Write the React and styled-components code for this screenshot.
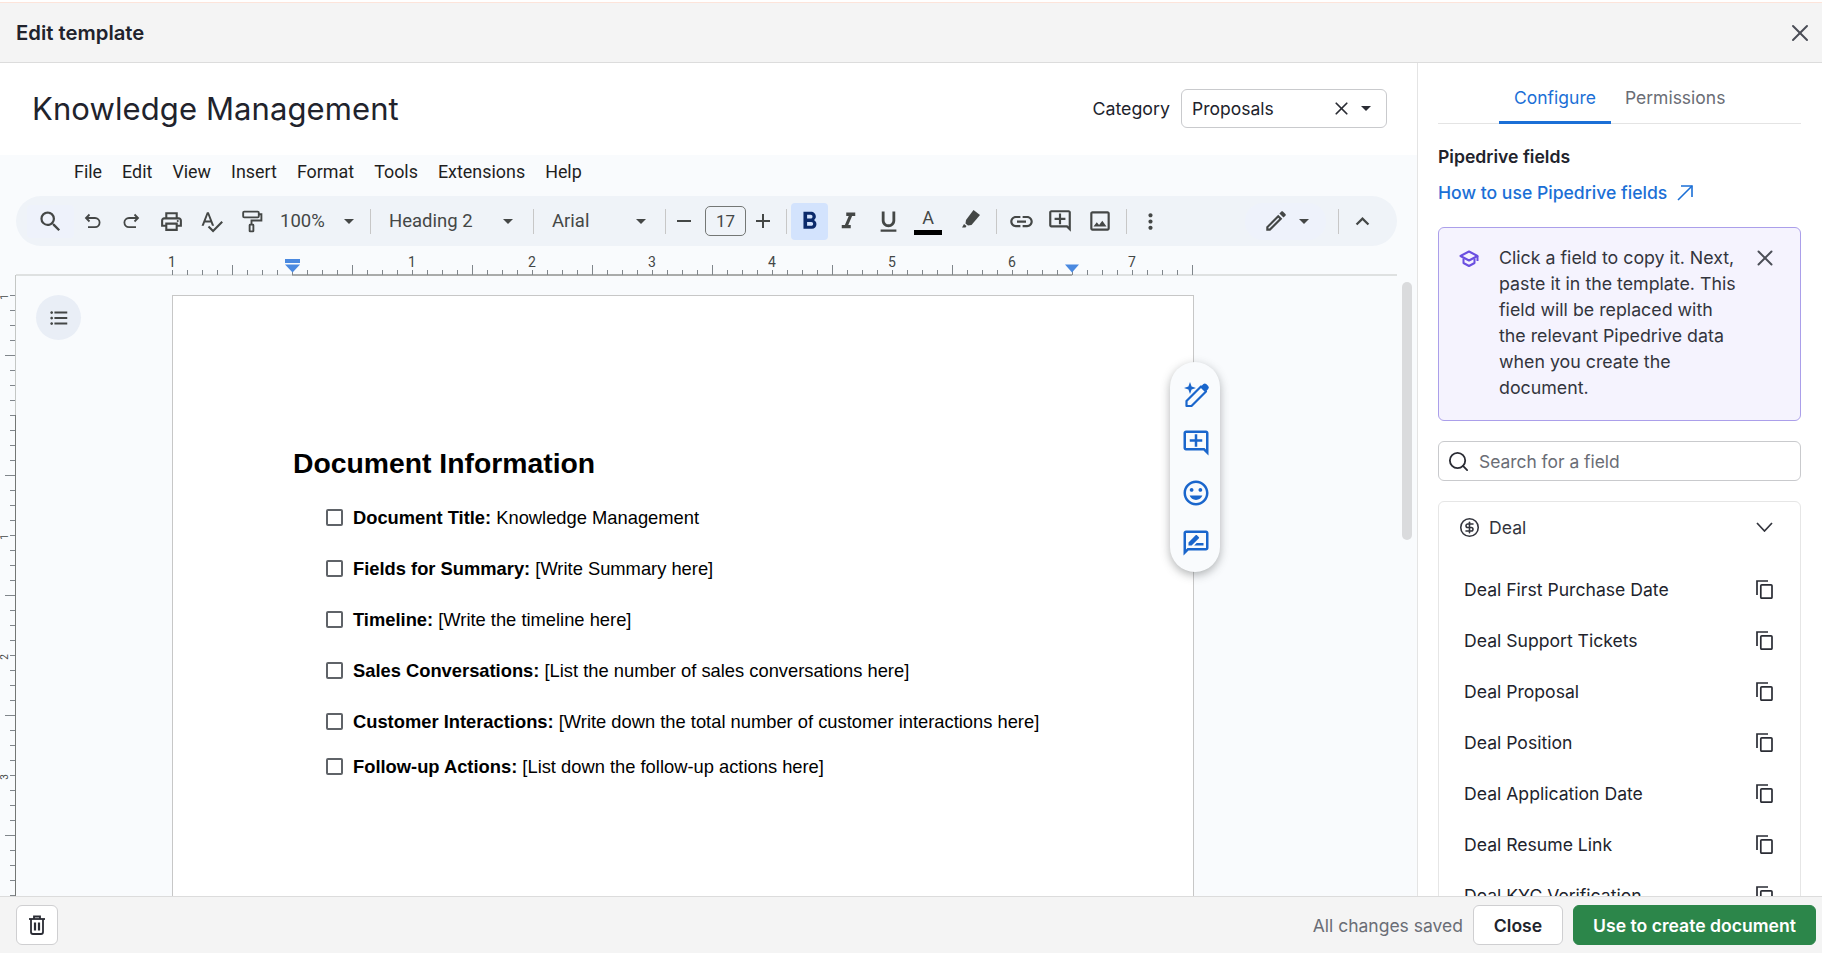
import React from 'react';
import styled, { createGlobalStyle } from 'styled-components';
import { CircleDollarSign, Search, X } from 'lucide-react';
import {
  MdExpandLess,
  MdFormatBold,
  MdFormatItalic,
  MdFormatListBulleted,
  MdFormatUnderlined,
  MdLink,
  MdMoreVert,
  MdOutlineAddComment,
  MdOutlineEdit,
  MdOutlineImage,
  MdOutlineInsertEmoticon,
  MdOutlineLocalPrintshop,
  MdOutlineRateReview,
  MdSearch,
  MdSpellcheck,
} from 'react-icons/md';

const inter = '"Inter", "Liberation Sans", sans-serif';
const docsFont = '"Roboto", "Liberation Sans", sans-serif';
const iconGrey = '#444746';
const linkBlue = '#1b6fd6';

const GlobalStyle = createGlobalStyle`
  html, body, #root {
    height: 100%;
    margin: 0;
  }
  body {
    font-family: ${inter};
    color: #21232c;
    background: #fff;
    overflow: hidden;
  }
  * {
    box-sizing: border-box;
  }
`;

const Shell = styled.div`
  height: 100vh;
  display: flex;
  flex-direction: column;
  overflow: hidden;
`;

const TopStripe = styled.div`
  height: 3px;
  flex: none;
  background: #f4f4f4;
  border-top: 2px solid #fff;
  border-bottom: 1px solid #fde4da;
`;

const Header = styled.header`
  height: 60px;
  flex: none;
  display: flex;
  align-items: center;
  justify-content: space-between;
  padding: 0 8px 0 16px;
  background: #f4f4f4;
  border-bottom: 1px solid #dcdcdc;
`;

const HeaderTitle = styled.h1`
  margin: 0;
  font-size: 20.3px;
  font-weight: 600;
`;

const IconButton = styled.button`
  display: flex;
  align-items: center;
  justify-content: center;
  padding: 0;
  border: 0;
  background: none;
  color: ${(p) => p.$color || '#4b4e57'};
`;

const Body = styled.div`
  flex: 1;
  min-height: 0;
  display: flex;
`;

const Main = styled.main`
  flex: 1;
  min-width: 0;
  display: flex;
  flex-direction: column;
`;

const TitleRow = styled.div`
  height: 92px;
  flex: none;
  display: flex;
  align-items: center;
  padding: 0 30px 2px 32px;
`;

const DocName = styled.div`
  font-size: 31px;
  flex: 1;
  letter-spacing: 0.1px;
`;

const CategoryLabel = styled.span`
  font-size: 17.8px;
  margin-right: 11px;
`;

const CategorySelect = styled.div`
  width: 206px;
  height: 39px;
  display: flex;
  align-items: center;
  padding: 0 15px 0 10px;
  border: 1px solid #c9cacd;
  border-radius: 6px;
  font-size: 17.5px;
`;

const CategoryValue = styled.span`
  flex: 1;
`;

const Caret = styled.span`
  width: 0;
  height: 0;
  flex: none;
  border-left: 5px solid transparent;
  border-right: 5px solid transparent;
  border-top: 5px solid ${(p) => p.$color || iconGrey};
  margin-left: ${(p) => p.$gap || 0}px;
`;

const Editor = styled.div`
  flex: 1;
  min-height: 0;
  display: flex;
  flex-direction: column;
  background: #f9fbfd;
  font-family: ${docsFont};
`;

const MenuBar = styled.nav`
  height: 41px;
  flex: none;
  display: flex;
  align-items: center;
  gap: 20px;
  padding: 0 0 8px 74px;
  font-size: 17.9px;
  color: #1f1f1f;
`;

const Toolbar = styled.div`
  width: 1381px;
  height: 50px;
  flex: none;
  margin-left: 16px;
  padding: 0 11px;
  display: flex;
  align-items: center;
  background: #eff3f8;
  border-radius: 25px;
  color: ${iconGrey};
`;

const Tool = styled.button`
  width: ${(p) => p.$w}px;
  height: ${(p) => (p.$tall ? 37 : 33)}px;
  flex: none;
  display: flex;
  align-items: center;
  justify-content: center;
  gap: ${(p) => p.$gap || 0}px;
  margin-left: ${(p) => p.$ml || 0}px;
  padding: 0;
  border: 0;
  border-radius: ${(p) => p.$radius || 4}px;
  background: ${(p) => p.$bg || 'none'};
  color: ${(p) => p.$color || iconGrey};
  font-family: ${docsFont};
`;

const Pick = styled.div`
  width: ${(p) => p.$w}px;
  flex: none;
  display: flex;
  align-items: center;
  justify-content: space-between;
  padding: 0 ${(p) => p.$pr}px 0 ${(p) => p.$pl}px;
  font-size: 18.5px;
  color: ${iconGrey};
`;

const Sep = styled.span`
  width: 1px;
  height: 25px;
  flex: none;
  margin-left: ${(p) => p.$ml}px;
  background: #c7c7c7;
`;

const SizeBox = styled.div`
  width: 41px;
  height: 30px;
  flex: none;
  margin-left: 3px;
  display: flex;
  align-items: center;
  justify-content: center;
  border: 1px solid #747775;
  border-radius: 5px;
  font-size: 17px;
  color: ${iconGrey};
`;

const ColorA = styled.span`
  display: flex;
  flex-direction: column;
  align-items: center;
  font-size: 18px;
  line-height: 18px;
  padding-top: 2px;
`;

const ColorBar = styled.span`
  width: 28px;
  height: 5px;
  margin-top: 3px;
  background: #000;
`;

const RulerWrap = styled.div`
  height: 29px;
  flex: none;
`;

const Canvas = styled.div`
  flex: 1;
  min-height: 0;
  display: flex;
`;

const SideRuler = styled.div`
  width: 16px;
  flex: none;
`;

const DocArea = styled.div`
  position: relative;
  flex: 1;
  min-width: 0;
  padding: 20px 0 0 156px;
  overflow: hidden;
`;

const OutlineToggle = styled.button`
  position: absolute;
  left: 20px;
  top: 20px;
  width: 45px;
  height: 45px;
  display: flex;
  align-items: center;
  justify-content: center;
  padding: 0;
  border: 0;
  border-radius: 50%;
  background: #e9eef6;
  color: ${iconGrey};
`;

const Scrollbar = styled.div`
  position: absolute;
  left: 1386px;
  top: 7px;
  width: 10px;
  height: 258px;
  border-radius: 5px;
  background: #dadbdd;
`;

const FloatBar = styled.div`
  position: absolute;
  left: 1154px;
  top: 87px;
  width: 50px;
  height: 210px;
  padding: 4px 0 0 2px;
  display: flex;
  flex-direction: column;
  align-items: center;
  justify-content: center;
  gap: 20px;
  background: #f9fbfd;
  border-radius: 25px;
  box-shadow: 0 3px 10px rgba(60, 64, 67, 0.4);
  color: #1a66cc;
`;

const Page = styled.article`
  width: 1022px;
  min-height: 900px;
  padding: 151px 0 0 120px;
  background: #fff;
  border: 1px solid #c7c7c7;
  font-family: "Liberation Sans", Arial, sans-serif;
  color: #000;
`;

const DocHeading = styled.h2`
  margin: 0 0 13px;
  font-size: 28.33px;
  line-height: 32px;
  font-weight: 700;
`;

const CheckRow = styled.div`
  height: 51px;
  display: flex;
  align-items: center;
  margin-top: ${(p) => p.$pull || 0}px;
  padding-left: 33px;
  font-size: 18.33px;
`;

const CheckBox = styled.span`
  width: 17px;
  height: 17px;
  flex: none;
  margin-right: 10px;
  border: 2px solid #5f6368;
  border-radius: 2px;
`;

const Side = styled.aside`
  width: 405px;
  flex: none;
  padding: 0 21px 0 20px;
  border-left: 1px solid #e4e4e4;
  overflow: hidden;
`;

const Tabs = styled.div`
  height: 61px;
  display: flex;
  padding-left: 61px;
  border-bottom: 1px solid #e4e4e4;
`;

const Tab = styled.div`
  height: 61px;
  padding: 24px 15px 0 ${(p) => (p.$active ? 15 : 14)}px;
  font-size: 17.5px;
  line-height: 22px;
  color: ${(p) => (p.$active ? linkBlue : '#6a6d75')};
  border-bottom: ${(p) => (p.$active ? `3px solid ${linkBlue}` : 'none')};
`;

const SideTitle = styled.div`
  margin-top: 22px;
  font-size: 17.6px;
  line-height: 22px;
  font-weight: 600;
`;

const HelpLink = styled.a`
  margin-top: 14px;
  display: flex;
  align-items: center;
  gap: 10px;
  font-size: 17.6px;
  line-height: 22px;
  font-weight: 500;
  color: ${linkBlue};
`;

const Notice = styled.div`
  height: 194px;
  margin-top: 23px;
  padding: 17px 22px 0 20px;
  display: flex;
  background: #f5f3fe;
  border: 1px solid #ab9fea;
  border-radius: 6px;
`;

const NoticeIcon = styled.svg`
  width: 20px;
  height: 20px;
  flex: none;
  margin-top: 4px;
`;

const NoticeText = styled.p`
  width: 241px;
  flex: none;
  margin: 0 0 0 20px;
  font-size: 17.8px;
  line-height: 26px;
  color: #33353d;
`;

const NoticeClose = styled(IconButton)`
  margin: 0 0 0 auto;
  height: 26px;
`;

const SearchBox = styled.div`
  height: 40px;
  margin-top: 20px;
  display: flex;
  align-items: center;
  gap: 9px;
  padding: 0 8px;
  border: 1px solid #c9cacd;
  border-radius: 6px;
  font-size: 17.4px;
  color: #6a6d75;
`;

const FieldCard = styled.section`
  margin-top: 20px;
  height: 500px;
  border: 1px solid #e6e6e6;
  border-radius: 6px;
`;

const CardHead = styled.div`
  height: 50px;
  display: flex;
  align-items: center;
  padding: 0 27px 0 20px;
  font-size: 17.6px;
  color: #33353d;
`;

const CardTitle = styled.span`
  flex: 1;
  margin-left: 9px;
`;

const FieldList = styled.div`
  padding-top: 12px;
`;

const FieldRow = styled.div`
  height: 51px;
  display: flex;
  align-items: center;
  justify-content: space-between;
  padding: 0 27px 0 25px;
  font-size: 17.6px;
`;

const Footer = styled.footer`
  height: 57px;
  flex: none;
  display: flex;
  align-items: center;
  padding: 0 6px 0 16px;
  background: #f4f4f4;
  border-top: 1px solid #dcdcdc;
`;

const FootBtn = styled.button`
  height: 40px;
  width: ${(p) => p.$w}px;
  flex: none;
  display: flex;
  align-items: center;
  justify-content: center;
  margin-left: ${(p) => p.$ml || 0}px;
  padding: 0;
  border: 1px solid ${(p) => (p.$primary ? '#2c864a' : '#cfcfd1')};
  border-radius: 6px;
  background: ${(p) => (p.$primary ? '#2c864a' : '#fff')};
  color: ${(p) => (p.$primary ? '#fff' : '#21232c')};
  font-family: ${inter};
  font-size: 17.6px;
  font-weight: 600;
`;

const Saved = styled.span`
  margin-left: auto;
  font-size: 17.5px;
  color: #6a6d75;
`;

const menus = ['File', 'Edit', 'View', 'Insert', 'Format', 'Tools', 'Extensions', 'Help'];

const checks = [
  ['Document Title:', 'Knowledge Management'],
  ['Fields for Summary:', '[Write Summary here]'],
  ['Timeline:', '[Write the timeline here]'],
  ['Sales Conversations:', '[List the number of sales conversations here]'],
  ['Customer Interactions:', '[Write down the total number of customer interactions here]'],
  ['Follow-up Actions:', '[List down the follow-up actions here]'],
];

const fields = [
  'Deal First Purchase Date',
  'Deal Support Tickets',
  'Deal Proposal',
  'Deal Position',
  'Deal Application Date',
  'Deal Resume Link',
  'Deal KYC Verification',
];

const TopRuler = () => {
  const ticks = [];
  for (let x = 172; x <= 1192; x += 15) {
    ticks.push(x);
  }
  const labels = [
    [172, '1'],
    [412, '1'],
    [532, '2'],
    [652, '3'],
    [772, '4'],
    [892, '5'],
    [1012, '6'],
    [1132, '7'],
  ];
  return (
    <svg width="1397" height="29" viewBox="0 246 1397 29" style={{ display: 'block', overflow: 'visible' }}>
      <line x1="16" x2="1397" y1="275" y2="275" stroke="#c4c7c5" />
      <line x1="292" x2="1072" y1="275" y2="275" stroke="#747775" />
      {ticks.map((x) => (
        <line
          key={x}
          x1={x + 0.5}
          x2={x + 0.5}
          y1={(x - 232) % 120 === 0 ? 265 : 270}
          y2="275"
          stroke="#80868b"
        />
      ))}
      {labels.map(([x, t]) => (
        <text key={x} x={x} y="267" textAnchor="middle" fontSize="14" fontFamily="Roboto, sans-serif" fill="#444746">
          {t}
        </text>
      ))}
      <rect x="285" y="259" width="15" height="4" fill="#4a89e0" />
      <path d="M285 264.5h15l-7.5 8z" fill="#4a89e0" />
      <path d="M1065 264.5h14l-7 8z" fill="#4a89e0" />
    </svg>
  );
};

const LeftRuler = () => {
  const ticks = [];
  for (let y = 295; y <= 895; y += 15) {
    ticks.push(y);
  }
  const offset = 275;
  return (
    <svg width="16" height="621" viewBox={`0 ${offset} 16 621`} style={{ display: 'block' }}>
      <line x1="15.5" x2="15.5" y1={offset} y2="415" stroke="#c4c7c5" />
      <line x1="15.5" x2="15.5" y1="415" y2="896" stroke="#747775" />
      {ticks.map((y) => (
        <line
          key={y}
          x1={(y - 355) % 120 === 0 ? 5 : 10}
          x2="15"
          y1={y + 0.5}
          y2={y + 0.5}
          stroke="#80868b"
        />
      ))}
      {[
        [297, '1'],
        [537, '1'],
        [657, '2'],
        [777, '3'],
      ].map(([y, t]) => (
        <text
          key={y}
          x="8"
          y={y}
          textAnchor="middle"
          fontSize="10"
          fontFamily="Roboto, sans-serif"
          fill="#444746"
          transform={`rotate(-90 8 ${y})`}
        >
          {t}
        </text>
      ))}
    </svg>
  );
};

const UndoIcon = () => (
  <svg width="24" height="24" viewBox="0 0 24 24" fill="none" stroke="currentColor" strokeWidth="1.8">
    <path d="M8.5 5.5L5 9l3.5 3.5" />
    <path d="M5 9h9a4.6 4.6 0 0 1 0 9.2H7" />
  </svg>
);

const RedoIcon = () => (
  <svg width="24" height="24" viewBox="0 0 24 24" fill="none" stroke="currentColor" strokeWidth="1.8">
    <path d="M15.5 5.5L19 9l-3.5 3.5" />
    <path d="M19 9h-9a4.6 4.6 0 0 0 0 9.2h7" />
  </svg>
);

const RollerIcon = () => (
  <svg width="25" height="25" viewBox="0 0 24 24" fill="none" stroke="currentColor" strokeWidth="1.8">
    <rect x="4" y="2.5" width="15" height="5.5" rx="1" />
    <path d="M19 5h2.5v6H12v3.5" />
    <rect x="10.2" y="15" width="3.6" height="6.5" rx="0.5" />
  </svg>
);

const SparklePen = () => (
  <svg width="28" height="28" viewBox="0 0 28 28" fill="none">
    <path d="M8 2l1.6 4.4L14 8l-4.4 1.6L8 14l-1.6-4.4L2 8l4.4-1.6z" fill="currentColor" />
    <path d="M4.5 26v-5L19 6.5l5 5L9.5 26z" stroke="currentColor" strokeWidth="2.2" strokeLinejoin="round" />
    <path d="M19 6.5l2.4-2.4a2 2 0 0 1 2.8 0l2 2a2 2 0 0 1 0 2.8L24 11.5z" fill="currentColor" />
  </svg>
);

const Highlighter = () => (
  <svg width="22" height="22" viewBox="0 0 22 22" fill="currentColor">
    <path d="M13.5 0l6.5 5-8.5 10-3.5.5-2.5-2 .5-3.5z" />
    <path d="M4 14l2.5 2-1 1.5H2z" />
  </svg>
);

const CopyIcon = () => (
  <svg width="17" height="19" viewBox="0 0 17 19" fill="none" stroke="#2a2c34" strokeWidth="1.7">
    <path d="M1 15V1h11" />
    <rect x="4.8" y="4.8" width="11.2" height="13.4" rx="1" />
  </svg>
);

const TrashIcon = () => (
  <svg width="18" height="20" viewBox="0 0 18 20" fill="none" stroke="#2a2c34" strokeWidth="1.8">
    <path d="M1 4h16" />
    <path d="M6 4V1.5h6V4" />
    <path d="M3 4v13a2 2 0 0 0 2 2h8a2 2 0 0 0 2-2V4" />
    <path d="M7 7.5v8M11 7.5v8" strokeWidth="2.2" />
  </svg>
);

const ExternalArrow = () => (
  <svg width="16" height="16" viewBox="0 0 16 16" fill="none" stroke="currentColor" strokeWidth="1.6">
    <path d="M1 15L15 1" />
    <path d="M4 1h11v11" />
  </svg>
);

const Chevron = () => (
  <svg width="17" height="10" viewBox="0 0 17 10" fill="none" stroke="#33353d" strokeWidth="1.7">
    <path d="M1 1l7.5 8L16 1" />
  </svg>
);

const App = () => {
  return (
    <Shell>
      <GlobalStyle />
      <TopStripe />
      <Header>
        <HeaderTitle>Edit template</HeaderTitle>
        <IconButton>
          <X size={28} strokeWidth={1.7} />
        </IconButton>
      </Header>
      <Body>
        <Main>
          <TitleRow>
            <DocName>Knowledge Management</DocName>
            <CategoryLabel>Category</CategoryLabel>
            <CategorySelect>
              <CategoryValue>Proposals</CategoryValue>
              <X size={21} strokeWidth={2} color="#2a2c34" />
              <Caret $color="#2a2c34" $gap={9} />
            </CategorySelect>
          </TitleRow>
          <Editor>
            <MenuBar>
              {menus.map((m) => (
                <span key={m}>{m}</span>
              ))}
            </MenuBar>
            <Toolbar>
              <Tool $w={47} $bg="#eef2fb"><MdSearch size={27} /></Tool>
              <Tool $w={37}><UndoIcon /></Tool>
              <Tool $w={40}><RedoIcon /></Tool>
              <Tool $w={40}><MdOutlineLocalPrintshop size={25} /></Tool>
              <Tool $w={40}><MdSpellcheck size={25} /></Tool>
              <Tool $w={40}><RollerIcon /></Tool>
              <Pick $w={87} $pl={9} $pr={4}>100%<Caret /></Pick>
              <Sep $ml={12} />
              <Pick $w={146} $pl={18} $pr={4}>Heading 2<Caret /></Pick>
              <Sep $ml={16} />
              <Pick $w={116} $pl={18} $pr={4}>Arial<Caret /></Pick>
              <Sep $ml={15} />
              <Tool $w={36}>
                <svg width="14" height="2"><rect width="14" height="2" fill="currentColor" /></svg>
              </Tool>
              <SizeBox>17</SizeBox>
              <Tool $w={34}>
                <svg width="14" height="14"><path d="M6 0h2v6h6v2H8v6H6V8H0V6h6z" fill="currentColor" /></svg>
              </Tool>
              <Sep $ml={6} />
              <Tool $w={37} $ml={4} $tall $bg="#d3e3fd" $color="#0b2a6b"><MdFormatBold size={29} /></Tool>
              <Tool $w={40}><MdFormatItalic size={27} /></Tool>
              <Tool $w={40}><MdFormatUnderlined size={27} /></Tool>
              <Tool $w={40}>
                <ColorA>A<ColorBar /></ColorA>
              </Tool>
              <Tool $w={46}><Highlighter /></Tool>
              <Sep $ml={2} />
              <Tool $w={48}><MdLink size={27} /></Tool>
              <Tool $w={30}><MdOutlineAddComment size={26} /></Tool>
              <Tool $w={50}><MdOutlineImage size={26} /></Tool>
              <Sep $ml={1} />
              <Tool $w={46}><MdMoreVert size={25} /></Tool>
              <Tool $w={81} $ml={72} $tall $gap={10} $radius={18} $bg="#eef2fb">
                <MdOutlineEdit size={26} />
                <Caret />
              </Tool>
              <Sep $ml={12} />
              <Tool $w={46}><MdExpandLess size={27} /></Tool>
            </Toolbar>
            <RulerWrap>
              <TopRuler />
            </RulerWrap>
            <Canvas>
              <SideRuler>
                <LeftRuler />
              </SideRuler>
              <DocArea>
                <OutlineToggle>
                  <MdFormatListBulleted size={22} />
                </OutlineToggle>
                <Page>
                  <DocHeading>Document Information</DocHeading>
                  {checks.map(([label, rest], i) => (
                    <CheckRow key={label} $pull={i === checks.length - 1 ? -6 : 0}>
                      <CheckBox />
                      <span>
                        <strong>{label}</strong> {rest}
                      </span>
                    </CheckRow>
                  ))}
                </Page>
                <FloatBar>
                  <SparklePen />
                  <MdOutlineAddComment size={30} />
                  <MdOutlineInsertEmoticon size={30} />
                  <MdOutlineRateReview size={30} />
                </FloatBar>
                <Scrollbar />
              </DocArea>
            </Canvas>
          </Editor>
        </Main>
        <Side>
          <Tabs>
            <Tab $active>Configure</Tab>
            <Tab>Permissions</Tab>
          </Tabs>
          <SideTitle>Pipedrive fields</SideTitle>
          <HelpLink>
            How to use Pipedrive fields
            <ExternalArrow />
          </HelpLink>
          <Notice>
            <NoticeIcon viewBox="0 0 20 20" fill="none" stroke="#6a4fe0" strokeWidth="2">
              <path d="M10 2.5L1.5 7l8.5 4.5L18.5 7z" strokeLinejoin="round" />
              <path d="M4.5 9.5v4.5L10 17l5.5-3V9.5" strokeLinejoin="round" />
              <path d="M18.5 7v5" />
            </NoticeIcon>
            <NoticeText>
              Click a field to copy it. Next, paste it in the template. This field will be replaced with the relevant Pipedrive data when you create the document.
            </NoticeText>
            <NoticeClose>
              <X size={26} strokeWidth={1.8} />
            </NoticeClose>
          </Notice>
          <SearchBox>
            <Search size={23} strokeWidth={1.9} color="#2a2c34" />
            Search for a field
          </SearchBox>
          <FieldCard>
            <CardHead>
              <CircleDollarSign size={21} strokeWidth={1.8} />
              <CardTitle>Deal</CardTitle>
              <Chevron />
            </CardHead>
            <FieldList>
              {fields.map((f) => (
                <FieldRow key={f}>
                  {f}
                  <CopyIcon />
                </FieldRow>
              ))}
            </FieldList>
          </FieldCard>
        </Side>
      </Body>
      <Footer>
        <FootBtn $w={42}>
          <TrashIcon />
        </FootBtn>
        <Saved>All changes saved</Saved>
        <FootBtn $w={90} $ml={10}>Close</FootBtn>
        <FootBtn $w={243} $ml={10} $primary>Use to create document</FootBtn>
      </Footer>
    </Shell>
  );
};

export default App;
